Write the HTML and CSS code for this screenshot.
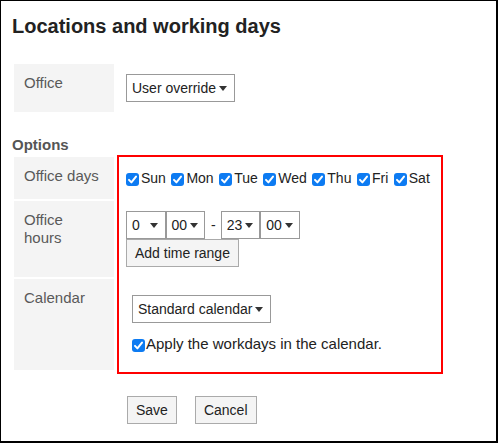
FILE: index.html
```html
<!DOCTYPE html>
<html>
<head>
<meta charset="utf-8">
<link rel="stylesheet" href="styles.css">
</head>
<body>
<div class="frame">
  <h1 class="title">Locations and working days</h1>

  <div class="form-grid">
    <div class="label">Office</div>
    <div class="value">
      <div class="sel"><span>User override</span><span class="caret"></span></div>
    </div>
  </div>

  <h2 class="section">Options</h2>

  <div class="form-grid options">
    <div class="label">Office days</div>
    <div class="value">
      <div class="days">
        <label class="chk"><span class="cb"><svg width="13" height="13" viewBox="0 0 13 13"><rect width="13" height="13" rx="3" fill="#0d7bf2"/><path d="M3 6.9 L5.4 9.4 L10 3.6" fill="none" stroke="#fff" stroke-width="2" stroke-linecap="round" stroke-linejoin="round"/></svg></span>Sun</label>
        <label class="chk"><span class="cb"><svg width="13" height="13" viewBox="0 0 13 13"><rect width="13" height="13" rx="3" fill="#0d7bf2"/><path d="M3 6.9 L5.4 9.4 L10 3.6" fill="none" stroke="#fff" stroke-width="2" stroke-linecap="round" stroke-linejoin="round"/></svg></span>Mon</label>
        <label class="chk"><span class="cb"><svg width="13" height="13" viewBox="0 0 13 13"><rect width="13" height="13" rx="3" fill="#0d7bf2"/><path d="M3 6.9 L5.4 9.4 L10 3.6" fill="none" stroke="#fff" stroke-width="2" stroke-linecap="round" stroke-linejoin="round"/></svg></span>Tue</label>
        <label class="chk"><span class="cb"><svg width="13" height="13" viewBox="0 0 13 13"><rect width="13" height="13" rx="3" fill="#0d7bf2"/><path d="M3 6.9 L5.4 9.4 L10 3.6" fill="none" stroke="#fff" stroke-width="2" stroke-linecap="round" stroke-linejoin="round"/></svg></span>Wed</label>
        <label class="chk"><span class="cb"><svg width="13" height="13" viewBox="0 0 13 13"><rect width="13" height="13" rx="3" fill="#0d7bf2"/><path d="M3 6.9 L5.4 9.4 L10 3.6" fill="none" stroke="#fff" stroke-width="2" stroke-linecap="round" stroke-linejoin="round"/></svg></span>Thu</label>
        <label class="chk"><span class="cb"><svg width="13" height="13" viewBox="0 0 13 13"><rect width="13" height="13" rx="3" fill="#0d7bf2"/><path d="M3 6.9 L5.4 9.4 L10 3.6" fill="none" stroke="#fff" stroke-width="2" stroke-linecap="round" stroke-linejoin="round"/></svg></span>Fri</label>
        <label class="chk"><span class="cb"><svg width="13" height="13" viewBox="0 0 13 13"><rect width="13" height="13" rx="3" fill="#0d7bf2"/><path d="M3 6.9 L5.4 9.4 L10 3.6" fill="none" stroke="#fff" stroke-width="2" stroke-linecap="round" stroke-linejoin="round"/></svg></span>Sat</label>
      </div>
    </div>

    <div class="label">Office hours</div>
    <div class="value">
      <div class="times">
        <div class="sel small"><span>0</span><span class="caret"></span></div>
        <div class="sel small"><span>00</span><span class="caret"></span></div>
        <span class="dash">-</span>
        <div class="sel small"><span>23</span><span class="caret"></span></div>
        <div class="sel small"><span>00</span><span class="caret"></span></div>
      </div>
      <button class="btn">Add time range</button>
    </div>

    <div class="label">Calendar</div>
    <div class="value">
      <div class="cal">
        <div class="sel"><span>Standard calendar</span><span class="caret"></span></div>
        <label class="chk apply"><span class="cb"><svg width="13" height="13" viewBox="0 0 13 13"><rect width="13" height="13" rx="3" fill="#0d7bf2"/><path d="M3 6.9 L5.4 9.4 L10 3.6" fill="none" stroke="#fff" stroke-width="2" stroke-linecap="round" stroke-linejoin="round"/></svg></span>Apply the workdays in the calendar.</label>
      </div>
    </div>

    <div class="highlight"></div>
  </div>

  <div class="actions">
    <button class="btn">Save</button>
    <button class="btn cancel">Cancel</button>
  </div>
</div>
</body>
</html>
```

FILE: styles.css
```css
* { box-sizing: border-box; }

html, body {
  margin: 0;
  padding: 0;
  background: #fff;
}

body {
  font-family: "Liberation Sans", Arial, sans-serif;
  color: #222;
}

.frame {
  width: 498px;
  height: 443px;
  border-style: solid;
  border-color: #000;
  border-width: 1px 2px 2px 1px;
  padding: 13px 0 0 11px;
}

.title {
  margin: 0;
  font-size: 20px;
  line-height: 24px;
  font-weight: bold;
  color: #222;
}

.form-grid {
  display: grid;
  grid-template-columns: 100px 1fr;
  gap: 2px;
  padding: 2px;
  margin-top: 24px;
  width: 440px;
}

.options {
  position: relative;
  margin-top: 1px;
}

.label {
  background: #f4f4f4;
  color: #595959;
  font-size: 15px;
  line-height: 18px;
  padding: 10px;
}

.value {
  padding: 10px;
  font-size: 14px;
}

.section {
  margin: 22px 0 0 0;
  font-size: 15px;
  line-height: 18px;
  font-weight: bold;
  color: #555;
}

.sel {
  display: inline-flex;
  align-items: center;
  height: 28px;
  border: 1px solid #999;
  background: #fff;
  padding: 0 7px 0 5px;
  gap: 3px;
  font-size: 14px;
  color: #222;
  vertical-align: top;
}

.sel.small {
  width: 39.5px;
  justify-content: space-between;
}

.caret {
  width: 0;
  height: 0;
  border-left: 4px solid transparent;
  border-right: 4px solid transparent;
  border-top: 5px solid #333;
}

.days {
  display: flex;
  align-items: center;
  height: 22px;
  column-gap: 5.5px;
}

.chk {
  display: inline-flex;
  align-items: center;
  color: #222;
}

.cb {
  display: inline-flex;
  width: 13px;
  height: 13px;
  margin-right: 2px;
  margin-top: 3px;
}

.times {
  display: flex;
  align-items: center;
}

.dash {
  margin: 0 5px 0 6px;
}

.btn {
  display: block;
  height: 28px;
  padding: 0 8px;
  border: 1px solid #aaa;
  background: #f4f4f4;
  font-family: "Liberation Sans", Arial, sans-serif;
  font-size: 14px;
  color: #222;
  border-radius: 0;
  margin: 0;
}

.cal {
  display: flex;
  flex-direction: column;
  align-items: flex-start;
  padding: 6px;
}

.apply {
  height: 21px;
  margin-top: 10px;
  font-size: 15px;
}

.apply .cb {
  margin-right: 1px;
}

.highlight {
  position: absolute;
  left: 105px;
  top: 0;
  width: 326px;
  height: 219px;
  border: 2px solid #f00;
  pointer-events: none;
}

.actions {
  display: flex;
  gap: 18px;
  margin: 24px 0 0 115px;
}
```
